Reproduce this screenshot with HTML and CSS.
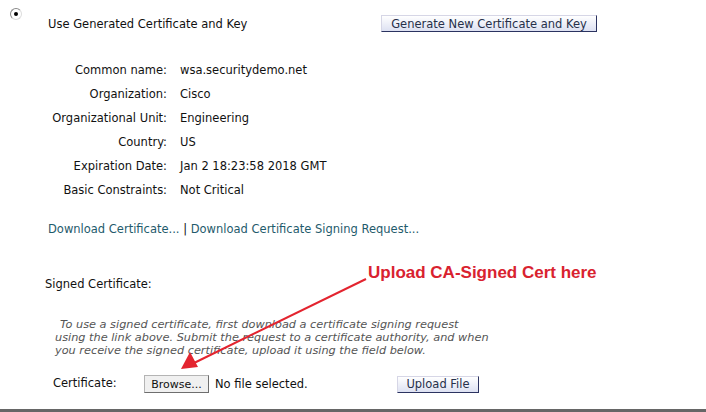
FILE: index.html
```html
<!DOCTYPE html>
<html lang="en">
<head>
    <meta charset="UTF-8">
    <title>Certificate</title>
    <link rel="stylesheet" href="styles.css">
</head>
<body>
    <div class="page">
        <div class="option">
            <span class="radio"><span class="dot"></span></span>
            <div class="option-body">
                <div class="option-head">
                    <span class="option-title">Use Generated Certificate and Key</span>
                    <button class="btn-blue btn-generate">Generate New Certificate and Key</button>
                </div>

                <div class="details">
                    <div class="label">Common name:</div>
                    <div>wsa.securitydemo.net</div>
                    <div class="label">Organization:</div>
                    <div>Cisco</div>
                    <div class="label">Organizational Unit:</div>
                    <div>Engineering</div>
                    <div class="label">Country:</div>
                    <div>US</div>
                    <div class="label">Expiration Date:</div>
                    <div>Jan 2 18:23:58 2018 GMT</div>
                    <div class="label">Basic Constraints:</div>
                    <div>Not Critical</div>
                </div>

                <div class="links">
                    <a href="#">Download Certificate...</a> | <a href="#">Download Certificate Signing Request...</a>
                </div>
            </div>
        </div>

        <div class="signed">
            <div class="signed-title">Signed Certificate:</div>
            <p class="hint">To use a signed certificate, first download a certificate signing request<br>using the link above. Submit the request to a certificate authority, and when<br>you receive the signed certificate, upload it using the field below.</p>
            <div class="upload-row">
                <span class="upload-label">Certificate:</span>
                <button class="btn-browse">Browse...</button>
                <span class="file-name">No file selected.</span>
                <button class="btn-blue btn-upload">Upload File</button>
            </div>
        </div>

        <div class="bottom-bar"></div>

        <!-- annotation on top of the screenshot -->
        <div class="callout">Upload CA-Signed Cert here</div>
        <svg class="arrow" width="706" height="412" viewBox="0 0 706 412">
            <line x1="366" y1="279" x2="192" y2="364" stroke="#e3242f" stroke-width="2"/>
            <polygon points="181,369 198,367 190,352" fill="#e3242f"/>
        </svg>
    </div>
</body>
</html>
```

FILE: styles.css
```css
body {
    margin: 0;
    font-family: "DejaVu Sans", Verdana, sans-serif;
    font-size: 11.5px;
    color: #111;
    background-color: white;
}

.page {
    position: relative;
    width: 706px;
    height: 412px;
    overflow: hidden;
}

.option {
    display: grid;
    grid-template-columns: 38px 1fr;
    padding-left: 10px;
}

.radio {
    margin-top: 8px;
    width: 10px;
    height: 10px;
    border: 1px solid #888;
    border-right-color: #ddd;
    border-bottom-color: #ddd;
    border-radius: 50%;
    display: flex;
    align-items: center;
    justify-content: center;
}

.dot {
    width: 4px;
    height: 4px;
    border-radius: 50%;
    background-color: black;
}

.option-head {
    display: flex;
    align-items: center;
    margin-top: 15px;
    height: 17px;
}

.option-title {
    width: 333px;
}

.btn-blue {
    font-family: "DejaVu Sans", Verdana, sans-serif;
    font-size: 11.5px;
    color: #27304a;
    background: linear-gradient(#ffffff, #dde1f2);
    border: 1px solid #d6d6e6;
    border-right-color: #2b3360;
    border-bottom-color: #2b3360;
    padding: 0;
    margin: 0;
    cursor: pointer;
}

.btn-generate {
    width: 216px;
    height: 17px;
}

.details {
    display: grid;
    grid-template-columns: 119px 1fr;
    column-gap: 13px;
    grid-auto-rows: 24px;
    align-items: center;
    margin-top: 26px;
}

.label {
    text-align: right;
}

.links {
    margin-top: 20px;
    line-height: 14px;
    color: #111;
}

.links a {
    color: #1f5b6c;
    text-decoration: none;
}

.signed {
    padding-left: 45px;
    margin-top: 41px;
}

.signed-title {
    line-height: 14px;
}

.hint {
    margin: 27px 0 0 10px;
    font-size: 11.3px;
    line-height: 13px;
    font-style: italic;
    color: #555;
    text-indent: 5px;
}

.upload-row {
    display: flex;
    align-items: center;
    margin-top: 18px;
    height: 18px;
    padding-left: 8px;
}

.upload-label {
    width: 91px;
    margin-top: -3px;
}

.btn-browse {
    width: 65px;
    height: 18px;
    font-family: "DejaVu Sans", Verdana, sans-serif;
    font-size: 11px;
    color: #111;
    background-color: #f0f0f0;
    border: 1px solid #b4b4b4;
    border-right-color: #6e6e6e;
    border-bottom-color: #6e6e6e;
    padding: 0;
    margin: 0 6px 0 0;
}

.file-name {
    width: 182px;
}

.btn-upload {
    width: 82px;
    height: 17px;
}

.bottom-bar {
    position: absolute;
    left: 0;
    right: 0;
    top: 409px;
    height: 3px;
    background-color: #666;
}

.callout {
    position: absolute;
    left: 368px;
    top: 263px;
    font-family: "Liberation Sans", Arial, sans-serif;
    font-size: 17px;
    line-height: 20px;
    font-weight: bold;
    color: #d9222f;
}

.arrow {
    position: absolute;
    left: 0;
    top: 0;
    pointer-events: none;
}
```
